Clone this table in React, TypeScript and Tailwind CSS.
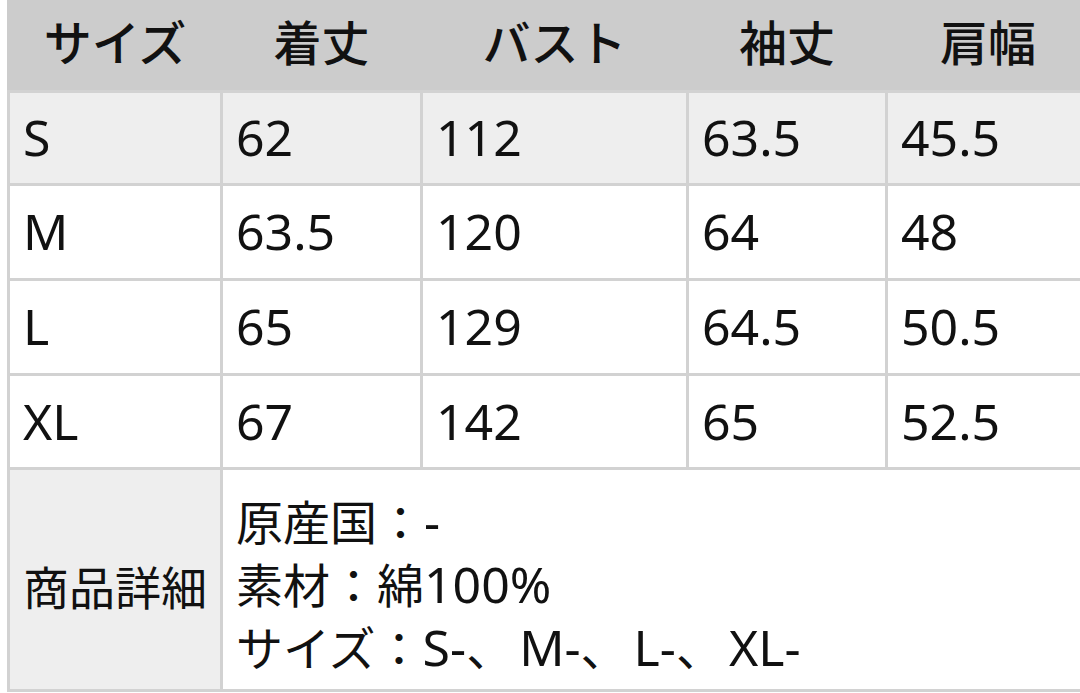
import React from "react";

const font = { fontFamily: '"Noto Sans", "Noto Sans CJK JP", sans-serif' };

const rows = [
  { h: "h-[90px]", bg: "bg-[#eeeeee]", cells: ["S", "62", "112", "63.5", "45.5"] },
  { h: "h-[92px]", bg: "bg-white", cells: ["M", "63.5", "120", "64", "48"] },
  { h: "h-[92px]", bg: "bg-white", cells: ["L", "65", "129", "64.5", "50.5"] },
  { h: "h-[91px]", bg: "bg-white", cells: ["XL", "67", "142", "65", "52.5"] },
];

const cols = "grid grid-cols-[210px_197px_263px_196px_200px] gap-x-[3px]";

const L = ({ children }: { children: React.ReactNode }) => (
  <span className="text-[50px] leading-none">{children}</span>
);
const C = () => <span className="tracking-[6px]">、</span>;

export default function App() {
  return (
    <div className="w-[1080px] h-[693px] overflow-hidden bg-white text-[#111111]" style={font}>
      <div className="ml-[7px] w-[1090px] pl-[3px] pb-[3px] bg-[#d2d2d2] flex flex-col gap-y-[3px]">
        <div className={`${cols} h-[90px] bg-[#cccccc] -ml-[3px] pl-[3px]`}>
          {["サイズ", "着丈", "バスト", "袖丈", "肩幅"].map((t) => (
            <div key={t} className="flex items-center justify-center pb-[4px] text-[48px] font-medium">
              {t}
            </div>
          ))}
        </div>
        {rows.map((r) => (
          <div key={r.cells[0]} className={`${cols} ${r.h}`}>
            {r.cells.map((c, i) => (
              <div key={i} className={`${r.bg} flex items-center pl-[13px] pb-[2px] text-[50px] leading-none`}>
                {c}
              </div>
            ))}
          </div>
        ))}
        <div className="grid grid-cols-[210px_1fr] gap-x-[3px] h-[219px]">
          <div className="bg-[#eeeeee] flex items-center pl-[13px] pt-[14px] text-[46px] leading-none">
            商品詳細
          </div>
          <div className="bg-white flex flex-col justify-center pl-[13px] pt-[12px] text-[47px] leading-[63px]">
            <div>原産国：<L>-</L></div>
            <div>素材：綿<L>100%</L></div>
            <div>
              サイズ：<L>S-</L><C /><L>M-</L><C /><L>L-</L><C /><L>XL-</L>
            </div>
          </div>
        </div>
      </div>
    </div>
  );
}
